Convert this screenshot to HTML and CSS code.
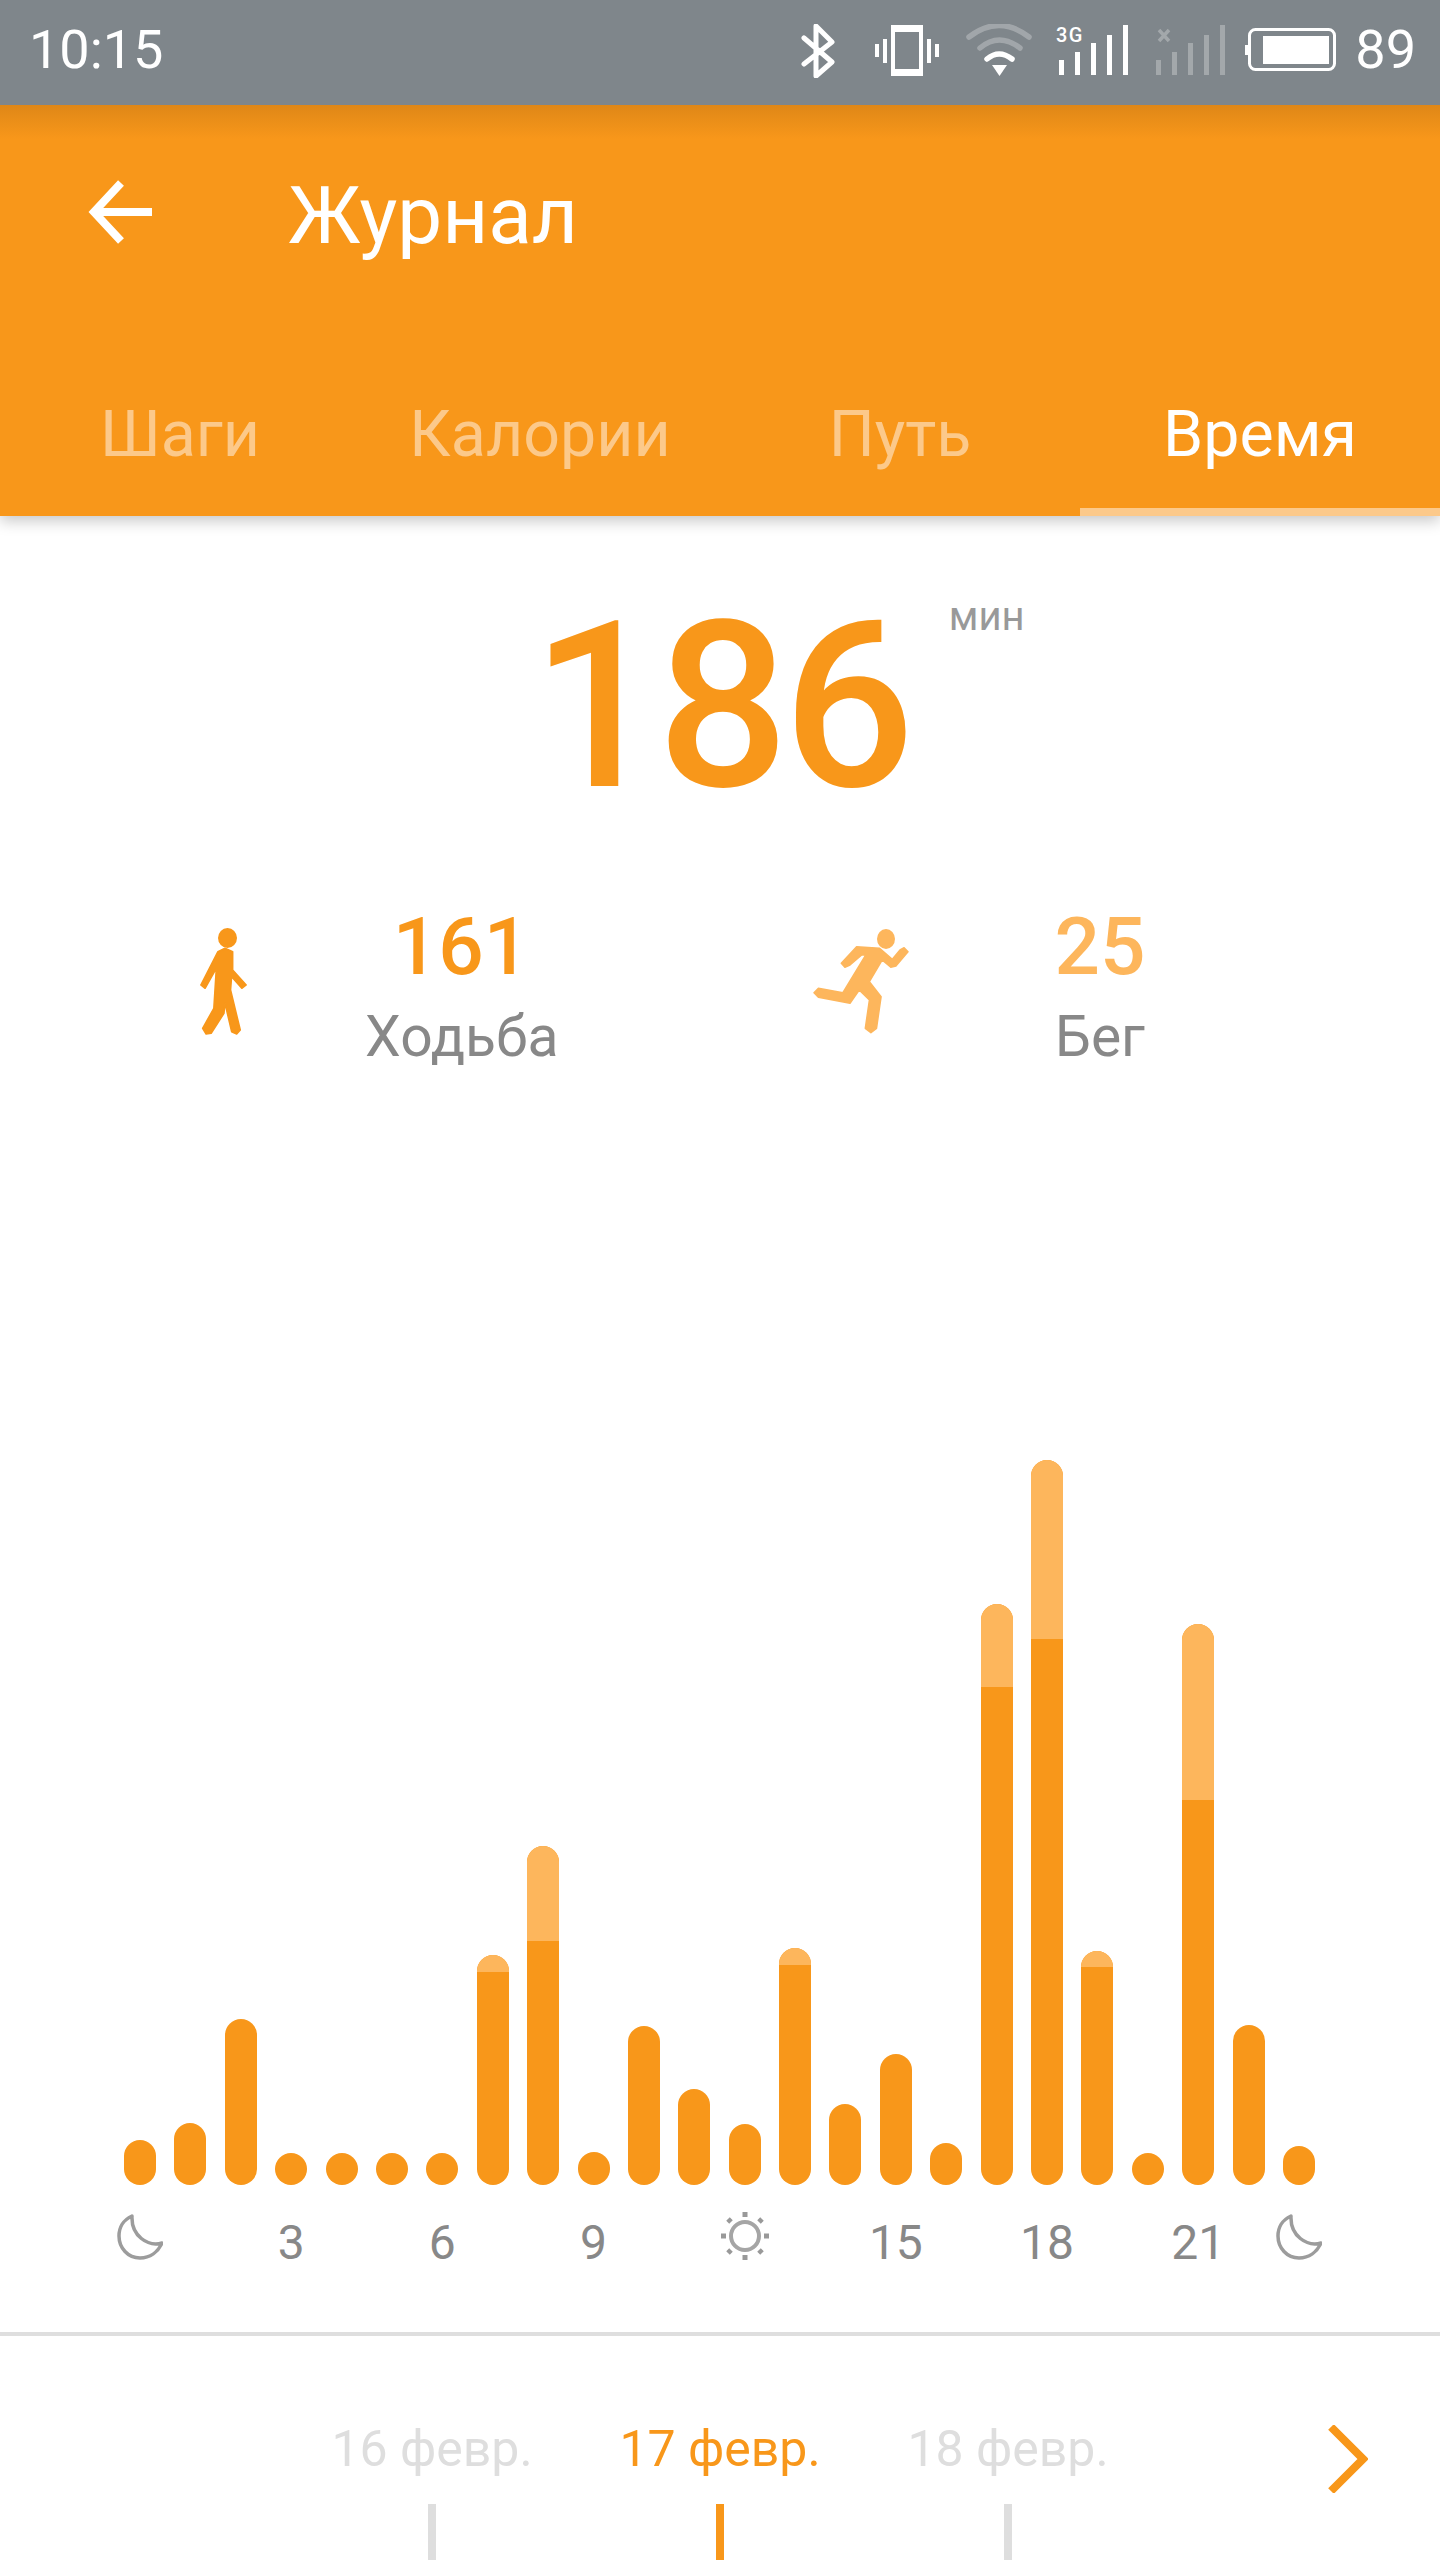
FILE: index.html
```html
<!DOCTYPE html>
<html lang="ru">
<head>
<meta charset="utf-8">
<title>Журнал</title>
<link rel="stylesheet" href="styles.css">
</head>
<body>
<div class="phone">
  <header class="header">
    <div class="status">
      <span class="time">10:15</span>
      <svg class="status-icons" viewBox="800 24 540 54" width="540" height="54">
        <polyline class="bt" points="804,38 832,62 816,76 816,26 832,42 804,64"/>
        <path class="vib" fill-rule="evenodd" d="M891 25h32v51h-32zM895 32v37h24V32zM875 44h4v13h-4zM883 39h4v24h-4zM927 39h4v24h-4zM935 44h4v13h-4z"/>
        <path class="wifi-dim" d="M969 37Q999 14 1029 37M980 48Q999 32 1020 48"/>
        <path class="wifi-on" d="M987 59Q999 49 1012 59"/>
        <path class="fill-w" d="M992 65h15l-7.500 11z"/>
        <text class="net" x="1056" y="42">3G</text>
        <path class="fill-w" d="M1059 60h5v15h-5zM1075 52h5v23h-5zM1091 43h5v32h-5zM1107 35h5v40h-5zM1123 25h5v50h-5z"/>
        <g class="dim">
          <path class="fill-w" d="M1156 60h5v15h-5zM1172 52h5v23h-5zM1188 43h5v32h-5zM1204 35h5v40h-5zM1220 25h5v50h-5z"/>
          <path class="cross" d="M1159 30l10 11M1169 30l-10 11"/>
        </g>
        <rect class="batt" x="1249.500" y="29.500" width="85" height="40" rx="6"/>
        <path class="fill-w" d="M1245 45h3v10h-3zM1263 36h66v28h-66z"/>
      </svg>
      <span class="level">89</span>
    </div>
    <div class="toolbar">
      <svg class="back" viewBox="0 0 64 64" width="64" height="64">
        <path d="M33 3L6 32L33 61M6 32H64"/>
      </svg>
      <h1 class="title">Журнал</h1>
    </div>
    <nav class="tabs">
      <span class="tab">Шаги</span>
      <span class="tab">Калории</span>
      <span class="tab">Путь</span>
      <span class="tab tab-active">Время</span>
    </nav>
  </header>

  <main class="content">
    <section class="hero">
      <span class="total">186<span class="unit">мин</span></span>
    </section>

    <section class="stats">
      <div class="stat stat-walk">
        <svg class="figure" viewBox="200 928 47 107" width="47" height="107">
          <ellipse class="fig-fill" cx="227.500" cy="938" rx="9.500" ry="10"/>
          <path class="fig-body" d="M225 948.300L217.900 951.700L200.800 985L205.100 988.300L216.300 968.300L213.800 1008.300L202.600 1028.300L206.100 1034L211.200 1033.300L224 1013.300L225 1003.300L231.600 1031.700L236.700 1034L240.300 1030L230.600 990L231.600 976.700L241.800 988.300L246.200 985L232.700 970L232.700 951.700Z"/>
        </svg>
        <div class="stat-text">
          <div class="stat-num">161</div>
          <div class="stat-label">Ходьба</div>
        </div>
      </div>
      <div class="stat stat-run">
        <svg class="figure figure-run" viewBox="813 928 96 107" width="96" height="107">
          <ellipse class="fig-fill" cx="886" cy="939" rx="9" ry="10"/>
          <path class="fig-body" d="M856.600 946.700L841.300 963.300L844.900 967.300L850 965L861.700 955L865.800 955L842.900 992.700L818.400 988.300L814 992.700L818.400 997.300L850 1003.300L859.200 990L869.400 1000L865.300 1028.300L870.900 1032.700L876.500 1028.300L881.100 996.700L869.400 981.700L882.100 960L890.800 967.300L895.900 966L908 951.700L904.100 947.700L900 950L892.300 959.300L879.600 948.300Z"/>
        </svg>
        <div class="stat-text stat-text-run">
          <div class="stat-num stat-num-run">25</div>
          <div class="stat-label">Бег</div>
        </div>
      </div>
    </section>

    <section class="chart">
      <div class="bar" style="height:45px"></div>
      <div class="bar" style="height:62px"></div>
      <div class="bar" style="height:166px"></div>
      <div class="bar" style="height:32px"></div>
      <div class="bar" style="height:32px"></div>
      <div class="bar" style="height:32px"></div>
      <div class="bar" style="height:32px"></div>
      <div class="bar" style="height:230px"><div class="run" style="height:17px"></div></div>
      <div class="bar" style="height:339px"><div class="run" style="height:95px"></div></div>
      <div class="bar" style="height:33px"></div>
      <div class="bar" style="height:159px"></div>
      <div class="bar" style="height:96px"></div>
      <div class="bar" style="height:61px"></div>
      <div class="bar" style="height:237px"><div class="run" style="height:17px"></div></div>
      <div class="bar" style="height:81px"></div>
      <div class="bar" style="height:131px"></div>
      <div class="bar" style="height:42px"></div>
      <div class="bar" style="height:581px"><div class="run" style="height:83px"></div></div>
      <div class="bar" style="height:725px"><div class="run" style="height:179px"></div></div>
      <div class="bar" style="height:234px"><div class="run" style="height:16px"></div></div>
      <div class="bar" style="height:32px"></div>
      <div class="bar" style="height:561px"><div class="run" style="height:176px"></div></div>
      <div class="bar" style="height:160px"></div>
      <div class="bar" style="height:39px"></div>
    </section>

    <section class="axis">
      <svg class="moon c1" viewBox="0 0 46 46" width="46" height="46"><path d="M15 2C6 6 2 14 2 22C2 34 11 44 23 44C33 44 41 38 45 29C31 33 14 22 15 2Z"/></svg>
      <span class="tick c4">3</span>
      <span class="tick c7">6</span>
      <span class="tick c10">9</span>
      <svg class="sun c13" viewBox="0 0 50 50" width="50" height="50">
        <circle class="sun-ring" cx="25" cy="25" r="14"/>
        <path class="sun-rays" d="M25 1v5M25 44v5M1 25h5M44 25h5M8 8l3 3M39 39l3 3M42 8l-3 3M11 39l-3 3"/>
      </svg>
      <span class="tick c16">15</span>
      <span class="tick c19">18</span>
      <span class="tick c22">21</span>
      <svg class="moon c24" viewBox="0 0 46 46" width="46" height="46"><path d="M15 2C6 6 2 14 2 22C2 34 11 44 23 44C33 44 41 38 45 29C31 33 14 22 15 2Z"/></svg>
    </section>

    <section class="dates">
      <div class="date"><span class="date-text">16 февр.</span><i class="date-tick"></i></div>
      <div class="date date-active"><span class="date-text">17 февр.</span><i class="date-tick"></i></div>
      <div class="date"><span class="date-text">18 февр.</span><i class="date-tick"></i></div>
      <svg class="next" viewBox="0 0 40 68" width="40" height="68"><path d="M3 2L35 34L3 66"/></svg>
    </section>
  </main>
</div>
</body>
</html>
```
FILE: styles.css
```css
* { box-sizing: border-box; }
html, body { margin: 0; padding: 0; background: #fff; }
.phone {
  width: 1440px;
  height: 2560px;
  overflow: hidden;
  font-family: Roboto, "Noto Sans", sans-serif;
  background: #fff;
}
.header {
  position: relative;
  z-index: 2;
  background: #f8971a;
  box-shadow: 0 5px 14px rgba(0, 0, 0, .22);
}
.status {
  height: 105px;
  display: flex;
  align-items: flex-start;
  padding: 23px 24px 0 29px;
  background: #7f868b;
  color: #fff;
  font-size: 54px;
  line-height: 54px;
}
.status-icons { margin: 1px 15px 0 auto; }
.bt { fill: none; stroke: #fff; stroke-width: 5; stroke-linecap: round; stroke-linejoin: round; }
.vib, .fill-w { fill: #fff; }
.wifi-dim { fill: none; stroke: #fff; stroke-opacity: .27; stroke-width: 5.500; stroke-linecap: round; }
.wifi-on { fill: none; stroke: #fff; stroke-width: 5.500; stroke-linecap: round; }
.net { fill: #fff; font-size: 20px; letter-spacing: 1.500px; font-family: Roboto, sans-serif; font-weight: 500; }
.dim { opacity: .28; }
.cross { stroke: #fff; stroke-width: 3.500; }
.batt { fill: none; stroke: #fff; stroke-width: 3; }
.toolbar {
  display: flex;
  align-items: flex-start;
  padding: 71px 0 0 88px;
  background: linear-gradient(#df8717, #f8971a 34px);
  height: 297px;
}
.back { margin-top: 4px; flex: none; }
.back path { fill: none; stroke: #fff; stroke-width: 8; }
.title {
  margin: 0 0 0 136px;
  color: #fff;
  font-size: 80px;
  line-height: 80px;
  font-weight: 400;
}
.tabs {
  display: grid;
  grid-template-columns: repeat(4, 360px);
  height: 114px;
}
.tab {
  text-align: center;
  color: #fcc98a;
  font-size: 64.5px;
  line-height: 64px;
}
.tab-active { color: #fff; border-bottom: 8px solid #fcc98a; }
.hero {
  display: flex;
  justify-content: center;
  padding-top: 75px;
  height: 309px;
}
.total {
  position: relative;
  height: 232px;
  color: #f8971a;
  font-size: 232px;
  line-height: 232px;
  letter-spacing: -6px;
  font-weight: 500;
}
.unit {
  position: absolute;
  left: 100%;
  top: 6px;
  margin-left: 40px;
  color: #999;
  font-size: 40px;
  line-height: 40px;
  letter-spacing: 0;
  font-weight: 400;
}
.stats {
  display: flex;
  margin-top: 82px;
  padding-left: 200px;
  height: 158px;
}
.stat { display: flex; }
.stat-walk { width: 613px; }
.figure { margin-top: 21px; flex: none; }
.fig-fill { fill: currentColor; }
.fig-body { fill: currentColor; stroke: currentColor; stroke-width: 1.500; stroke-linejoin: round; }
.stat-walk .figure { color: #f8971a; }
.figure-run { color: #fdb65c; }
.stat-text { margin-left: 118px; width: 192px; text-align: center; }
.stat-text-run { margin-left: 141px; width: 100px; }
.stat-num {
  color: #f8971a;
  font-size: 80px;
  line-height: 80px;
  font-weight: 500;
}
.stat-num-run { color: #fdb65c; }
.stat-label {
  margin-top: 22px;
  color: #888;
  font-size: 57px;
  line-height: 56px;
}
.chart {
  display: flex;
  align-items: flex-end;
  gap: 18.4px;
  height: 1120px;
  padding-left: 124px;
}
.bar {
  flex: none;
  width: 32px;
  border-radius: 16px;
  overflow: hidden;
  background: #f8971a;
}
.run { background: #fdb65c; }
.axis {
  display: grid;
  grid-template-columns: repeat(24, 50.4px);
  margin-top: 27px;
  padding-left: 114.8px;
  height: 120px;
  align-items: start;
}
.axis > * { grid-row: 1; justify-self: center; }
.tick {
  color: #888;
  font-size: 48px;
  line-height: 61px;
  white-space: nowrap;
}
.c1 { grid-column: 1; }
.c4 { grid-column: 4; }
.c7 { grid-column: 7; }
.c10 { grid-column: 10; }
.c13 { grid-column: 13; }
.c16 { grid-column: 16; }
.c19 { grid-column: 19; }
.c22 { grid-column: 22; }
.c24 { grid-column: 24; }
.moon { margin-top: 2px; }
.moon path { fill: none; stroke: #9c9c9c; stroke-width: 3.500; stroke-linejoin: round; }
.sun { margin-top: -1px; }
.sun-ring { fill: none; stroke: #a5a5a5; stroke-width: 4; }
.sun-rays { fill: none; stroke: #999; stroke-width: 5; }
.dates {
  display: grid;
  grid-template-columns: repeat(4, 288px);
  padding: 89px 0 0 288px;
  border-top: 4px solid #dedede;
  height: 228px;
  overflow: hidden;
}
.date {
  display: flex;
  flex-direction: column;
  align-items: center;
  color: #dedede;
}
.date-active { color: #f8971a; }
.date-text {
  font-size: 50px;
  line-height: 48px;
  white-space: nowrap;
}
.date-tick {
  width: 8px;
  height: 56px;
  margin-top: 31px;
  background: currentColor;
}
.next { justify-self: end; margin: 0 72px 0 0; }
.next path { fill: none; stroke: #f8971a; stroke-width: 8; }
```
